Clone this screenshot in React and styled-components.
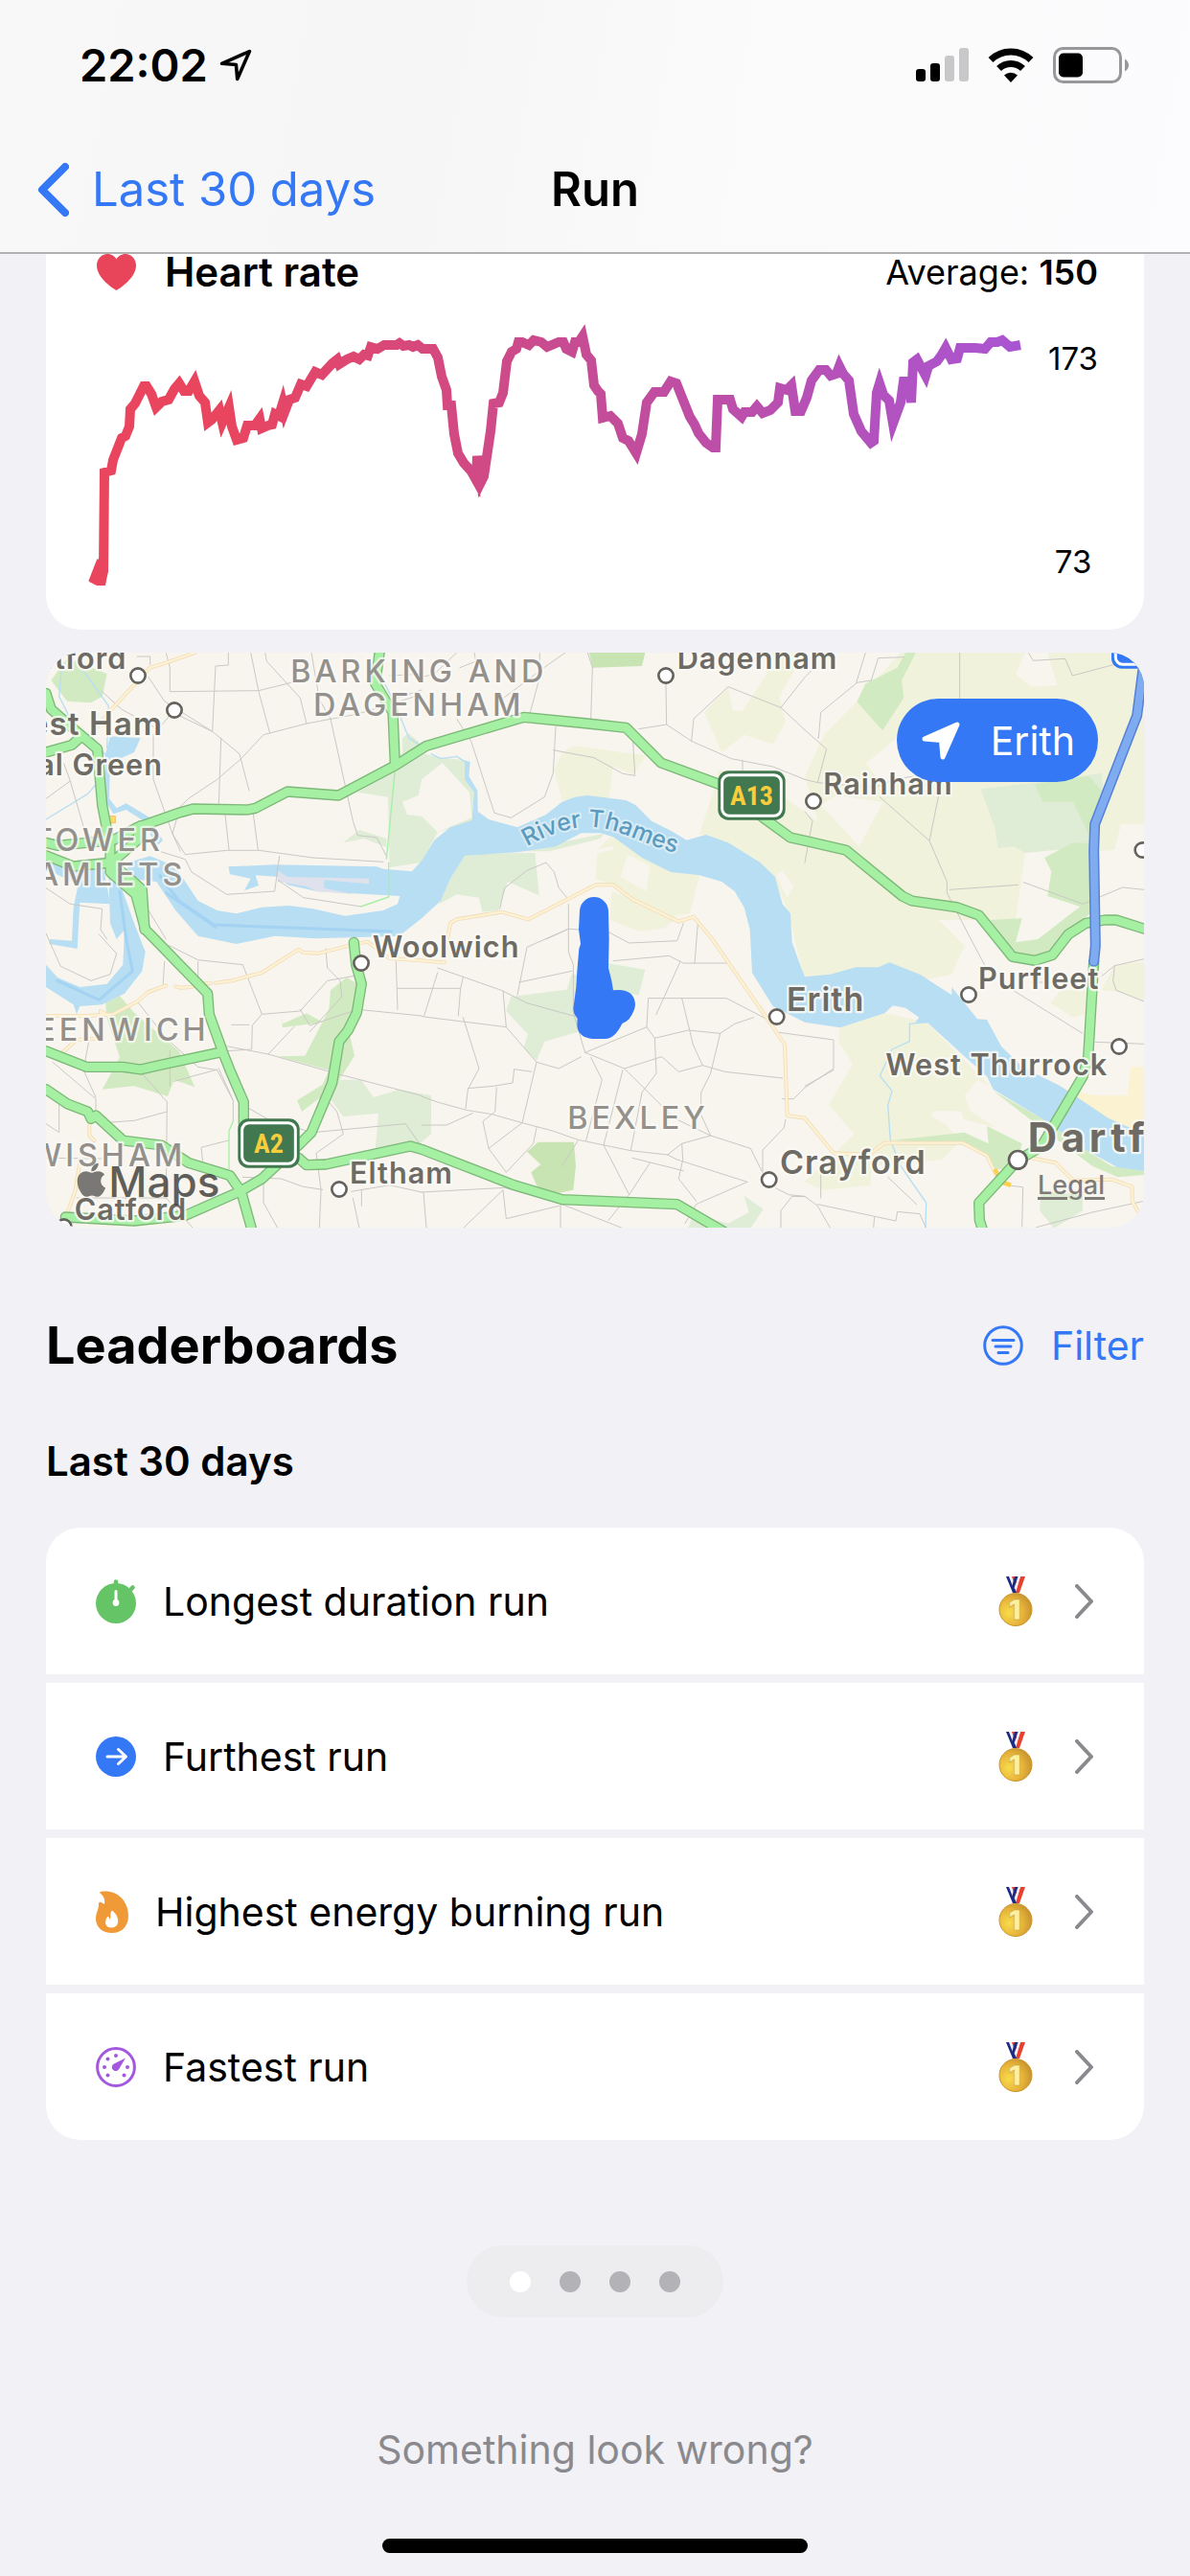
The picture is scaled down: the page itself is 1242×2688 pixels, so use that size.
import React from "react";
import styled, { createGlobalStyle } from "styled-components";
import { FaApple } from "react-icons/fa";

const blue = "#3478f6";

const GlobalStyle = createGlobalStyle`
  *, *::before, *::after { box-sizing: border-box; }
  body {
    margin: 0;
    background: #f2f1f6;
    color: #000;
    font-family: Inter, "Liberation Sans", sans-serif;
    font-size: 41px;
    line-height: 50px;
  }
  button {
    border: 0;
    padding: 0;
    background: none;
    color: inherit;
    font: inherit;
    cursor: pointer;
  }
  a { color: inherit; text-decoration: none; }
  h1, h2, h3, p, ul { margin: 0; padding: 0; font-size: inherit; }
  svg { display: block; flex: none; }
`;

const Page = styled.div`
  display: flex;
  flex-direction: column;
  min-height: 100vh;
`;

const Header = styled.header`
  background: linear-gradient(100deg, #f8f8f8 0%, #f6f6f6 35%, #fafafa 60%, #fcfcfe 100%);
  border-bottom: 2px solid #b1b1b4;
`;

const StatusBar = styled.div`
  display: flex;
  align-items: center;
  justify-content: space-between;
  height: 136px;
  padding: 0 64px 0 83px;
`;

const StatusGroup = styled.div`
  display: flex;
  align-items: center;
  gap: ${(p) => p.$gap}px;
`;

const Time = styled.span`
  font-size: 47px;
  font-weight: 600;
`;

const NavBar = styled.nav`
  display: grid;
  grid-template-columns: 1fr auto 1fr;
  align-items: center;
  height: 127px;
  padding: 0 39px 4px;
`;

const BackLink = styled.a`
  display: flex;
  align-items: center;
  gap: 24px;
  color: ${blue};
  font-size: 49px;
`;

const Title = styled.h1`
  font-size: 49px;
  font-weight: 600;
`;

const Main = styled.main`
  display: flex;
  flex-direction: column;
  padding: 0 48px;
`;

const HeartCard = styled.section`
  padding: 0 48px 42px 42px;
  border-radius: 0 0 36px 36px;
  background: #fff;
`;

const CardHead = styled.div`
  display: flex;
  align-items: center;
  height: 38px;
  padding-left: 11px;
`;

const CardTitle = styled.h2`
  flex: 1;
  padding-left: 30px;
  font-size: 42px;
  font-weight: 600;
`;

const Average = styled.p`
  font-size: 36px;

  b { font-weight: 600; }
`;

const ChartRow = styled.div`
  display: flex;
  justify-content: space-between;
  height: 312px;
`;

const Line = styled.svg`
  flex: 1;
  min-width: 0;
  height: 312px;
  overflow: visible;
`;

const Scale = styled.div`
  display: flex;
  flex-direction: column;
  align-items: center;
  justify-content: space-between;
  padding: 46px 0 4px 18px;
  font-size: 33px;
  line-height: 50px;
`;

const MapCard = styled.section`
  position: relative;
  margin-top: 24px;
  overflow: hidden;
  border-radius: 36px;
  background: #f8f5ee;
`;

const MapSvg = styled.svg`
  width: 100%;
  aspect-ratio: 1146 / 600;
  font-family: Inter, "Liberation Sans", sans-serif;
`;

const PlaceButton = styled.button`
  position: absolute;
  top: 48px;
  right: 48px;
  display: flex;
  align-items: center;
  gap: 32px;
  height: 87px;
  padding: 0 24px 0 26px;
  border-radius: 44px;
  background: ${blue};
  color: #fff;
`;

const Legal = styled.a`
  position: absolute;
  right: 41px;
  bottom: 26px;
  color: #7f7c78;
  font-size: 27px;
  font-weight: 500;
  line-height: 36px;
  text-decoration: underline;
  text-decoration-thickness: 3px;
  text-underline-offset: 3px;
`;

const SectionHead = styled.div`
  display: flex;
  align-items: center;
  justify-content: space-between;
  margin-top: 93px;
`;

const SectionTitle = styled.h2`
  font-size: 54px;
  font-weight: 700;
  line-height: 60px;
`;

const FilterButton = styled.button`
  display: flex;
  align-items: center;
  gap: 29px;
  color: ${blue};
`;

const SubTitle = styled.h3`
  margin-top: 66px;
  font-size: 42px;
  font-weight: 600;
`;

const Board = styled.ul`
  display: flex;
  flex-direction: column;
  gap: 9px;
  margin-top: 44px;
  overflow: hidden;
  border-radius: 36px;
  list-style: none;
`;

const Row = styled.a`
  display: flex;
  align-items: center;
  height: 153px;
  padding: 0 52px;
  background: #fff;
`;

const RowLabel = styled.span`
  flex: 1;
  padding-left: 28px;
`;

const RowEnd = styled.span`
  display: flex;
  align-items: center;
  gap: 44px;
`;

const Pager = styled.nav`
  display: flex;
  align-items: center;
  align-self: center;
  gap: 30px;
  height: 75px;
  margin-top: 110px;
  padding: 0 45px;
  border-radius: 38px;
  background: #ededf0;
`;

const Dot = styled.button`
  width: 22px;
  height: 22px;
  border-radius: 50%;
  background: ${(p) => (p.$active ? "#fff" : "#b3b2b7")};
`;

const Report = styled.button`
  align-self: center;
  margin-top: 113px;
  color: #8a8a8e;
`;

const HomeBar = styled.div`
  align-self: center;
  width: 444px;
  height: 15px;
  margin: auto 0 24px;
  border-radius: 8px;
  background: #000;
`;

/* ---------- icons ---------- */

const LocationArrow = ({ size, filled }) => (
  <svg width={size} height={size} viewBox="0 0 40 40" aria-hidden="true">
    <path
      d="M3 18 37 3 22 37 20.500 19.500z"
      fill={filled ? "currentColor" : "none"}
      stroke="currentColor"
      strokeWidth={filled ? 5 : 4.2}
      strokeLinejoin="round"
    />
  </svg>
);

const Signal = () => (
  <svg width="55" height="36" viewBox="0 0 55 36" aria-label="Signal">
    <rect x="0" y="22" width="10" height="13" rx="3" />
    <rect x="15" y="16" width="10" height="19" rx="3" />
    <rect x="30" y="8" width="10" height="27" rx="3" fill="#c8c8ca" />
    <rect x="45" y="0" width="10" height="35" rx="3" fill="#c8c8ca" />
  </svg>
);

const Wifi = () => (
  <svg width="48" height="36" viewBox="0 0 48 36" aria-label="Wi-Fi">
    <path d="M3 12.500a30 30 0 0 1 42 0M11.500 21.500a18 18 0 0 1 25 0" fill="none" stroke="#000" strokeWidth="7" />
    <path d="M24 36l-7-7.500a10 10 0 0 1 14 0z" />
  </svg>
);

const Battery = () => (
  <svg width="79" height="38" viewBox="0 0 79 38" aria-label="Battery">
    <rect x="1.500" y="1.500" width="69" height="35" rx="9" fill="none" stroke="#98989a" strokeWidth="3" />
    <path d="M75 12.500q4 2.500 4 6.500t-4 6.500z" fill="#98989a" />
    <rect x="6" y="6.500" width="25" height="25" rx="5" />
  </svg>
);

const Chevron = ({ width, height, color, stroke, back }) => (
  <svg width={width} height={height} viewBox={`0 0 ${width} ${height}`} aria-hidden="true">
    <path
      d={
        back
          ? `M${width - stroke / 2} ${stroke / 2}L${stroke / 2 + 1} ${height / 2}L${width - stroke / 2} ${height - stroke / 2}`
          : `M${stroke / 2} ${stroke / 2}L${width - stroke / 2 - 1} ${height / 2}L${stroke / 2} ${height - stroke / 2}`
      }
      fill="none"
      stroke={color}
      strokeWidth={stroke}
      strokeLinecap="round"
      strokeLinejoin="round"
    />
  </svg>
);

const Heart = () => (
  <svg width="41" height="38" viewBox="0 0 41 38" aria-hidden="true">
    <path
      d="M20.500 38C17 36 0 25 0 12 0 5 5 0 11 0c4.500 0 7.800 2.400 9.500 5.500C22.200 2.400 25.500 0 30 0c6 0 11 5 11 12 0 13-17 24-20.500 26z"
      fill="#e9455a"
    />
  </svg>
);

const FilterIcon = () => (
  <svg width="42" height="42" viewBox="0 0 42 42" fill="none" stroke={blue} strokeWidth="3" strokeLinecap="round" aria-hidden="true">
    <circle cx="21" cy="21" r="19.300" />
    <path d="M10 15.500h22M13 22h16M16 28.500h10" />
  </svg>
);

const Stopwatch = () => (
  <svg width="42" height="46" viewBox="0 0 42 46" aria-hidden="true">
    <circle cx="21" cy="25" r="21" fill="#64c466" />
    <path d="M21 2.500v6M38.500 8.500l-3 3" stroke="#64c466" strokeWidth="4.500" strokeLinecap="round" />
    <path d="M21 12.500v12" stroke="#fff" strokeWidth="3" strokeLinecap="round" />
    <circle cx="21" cy="24.500" r="3.400" fill="#fff" />
  </svg>
);

const ArrowCircle = () => (
  <svg width="42" height="42" viewBox="0 0 42 42" aria-hidden="true">
    <circle cx="21" cy="21" r="21" fill={blue} />
    <path d="M12 21h19M23.500 13.500l8 7.500-8 7.500" fill="none" stroke="#fff" strokeWidth="3" strokeLinecap="round" strokeLinejoin="round" />
  </svg>
);

const Flame = () => (
  <svg width="34" height="44" viewBox="0 0 34 44" aria-hidden="true">
    <path
      d="M5 1C20-2 34 9 34 26c0 11-7 18-17 18C7 44 0 38 0 29c0-6 3-9 3-15 0-4 3-2 6 0 1-5-1-9-4-11-1-1-1-2 0-2z"
      fill="#f09a37"
    />
    <path d="M17 20.500c-.5 0 5 3 6 9 1 5-1.500 9-6.500 9S9 35 10.500 30.500c.6-2 1.500-4 2.500-3.500 1 .4.500 2 1.500 2.500 2-.5-.5-6.500 2.500-9z" fill="#fff" />
  </svg>
);

const Gauge = () => (
  <svg width="42" height="42" viewBox="0 0 42 42" fill="#a358df" aria-hidden="true">
    <circle cx="21" cy="21" r="19.400" fill="none" stroke="#a358df" strokeWidth="3" />
    <circle cx="21" cy="9" r="2" />
    <circle cx="12.500" cy="12.500" r="2" />
    <circle cx="9" cy="21" r="2" />
    <circle cx="12.500" cy="29.500" r="2" />
    <circle cx="29.500" cy="29.500" r="2" />
    <circle cx="33" cy="21" r="2" />
    <path d="M31 11.500L24.500 22.500a4 4 0 1 1-5.500-5z" />
  </svg>
);

const Medal = () => (
  <svg width="36" height="52" viewBox="0 0 36 52" aria-label="First place">
    <defs>
      <radialGradient id="gold" cx="0.3" cy="0.6" r="0.8">
        <stop offset="0" stopColor="#f8dc4a" />
        <stop offset="0.55" stopColor="#e6b23a" />
        <stop offset="1" stopColor="#bd8a2a" />
      </radialGradient>
    </defs>
    <path d="M23 0h5l-6 17h-4z" fill="#e8402f" />
    <path d="M20 0h3l-6 17h-3z" fill="#f1f3f8" />
    <path d="M8 0h4l7 17h-4z" fill="#1c2a86" />
    <path d="M11 0h3l4 9-2 4z" fill="#f1f3f8" />
    <path d="M14 0h3l2 6-2 3z" fill="#e8402f" />
    <path d="M17 0h3.500l-5 15-1.500-4z" fill="#1c2a86" />
    <circle cx="18" cy="34.500" r="17" fill="url(#gold)" stroke="#c8942e" strokeWidth="1" />
    <text x="17" y="45" textAnchor="middle" fontFamily="Inter" fontWeight="900" fontSize="29" fill="#fbefa0" stroke="#c99a2f" strokeWidth="0.5">
      1
    </text>
  </svg>
);

/* ---------- heart rate line ---------- */

const heartPath =
  "M97 608 106 585 105 609 108 596 109 493 116 491 118 480 127 457 131 455 135 445 136 427 141 421 145 413 150 403 153 403 158 411 163 425 169 419 176 417 182 406 187 400 192 408 197 408 203 398 208 413 214 420 217 441 221 438 229 428 232 441 239 425 242 445 247 459 254 457 258 444 266 444 271 437 273 447 280 444 284 443 287 432 291 434 295 421 297 430 302 417 308 415 314 401 320 403 329 388 336 391 347 379 352 375 354 380 362 375 369 372 375 375 380 370 384 371 387 362 394 364 401 360 414 360 417 358 421 361 427 360 431 362 436 360 441 364 452 364 457 373 461 393 466 407 467 423 471 423 474 453 478 473 484 483 492 492 497 501 498 476 502 503 505 497 512 450 515 421 521 420 525 410 529 377 534 367 539 364 541 357 545 357 552 360 557 355 565 357 571 362 583 357 588 357 591 364 597 367 600 357 604 357 608 351 612 370 617 376 620 402 624 408 627 411 629 436 637 434 645 442 650 457 656 460 664 473 670 453 675 420 683 409 693 409 700 398 706 400 714 420 720 435 725 443 729 452 737 462 744 467 747 467 749 417 762 417 765 427 774 435 777 430 785 430 790 424 796 431 804 428 812 420 814 405 821 407 826 402 830 429 836 429 842 415 847 397 855 386 862 386 867 392 873 390 876 382 880 390 886 397 891 432 899 450 909 462 912 460 915 410 918 400 922 412 928 418 932 442 940 420 943 398 949 398 951 420 953 378 957 375 966 392 969 382 978 377 983 370 987 363 993 375 999 374 1002 363 1010 363 1018 363 1028 364 1034 357 1041 357 1046 355 1054 362 1065 360";

const HeartLine = () => (
  <Line viewBox="90 303 980 312" preserveAspectRatio="xMinYMin meet" role="img" aria-label="Heart rate over the run">
    <defs>
      <linearGradient id="rate" gradientUnits="userSpaceOnUse" x1="92" y1="0" x2="1065" y2="0">
        <stop offset="0" stopColor="#e9455e" />
        <stop offset="0.15" stopColor="#e9455f" />
        <stop offset="0.55" stopColor="#c44c98" />
        <stop offset="1" stopColor="#a955d2" />
      </linearGradient>
    </defs>
    <path d="M93 607 104 581 112 595 110 611 101 611z" fill="#e9455e" />
    <path d={heartPath} fill="none" stroke="url(#rate)" strokeWidth="10" strokeLinejoin="miter" strokeMiterlimit="6" />
  </Line>
);

/* ---------- map ---------- */

const paleFields = [
  "1615,400 1640,345 1675,325 1900,355 1865,415 1800,390 1785,500 1640,495",
  "2085,220 2160,140 2175,215 2205,215 2280,100 2290,33 2400,33 2355,110 2320,170 2340,250 2300,320 2210,290 2140,345",
  "2070,600 2110,480 2130,400 2270,440 2440,560 2400,420 2460,290 2560,190 2640,100 2700,33 3462,33 3462,570 3390,570 3370,650 3320,655 3160,650 3060,870 2820,870 2900,950 2860,1040 2760,1060 2665,1020 2560,1040 2400,1068 2350,850 2300,730 2160,650",
  "1750,650 1800,600 1850,640 1980,720 2070,730 2040,850 1960,860 1880,810 1790,760 1745,740",
  "1880,810 2000,860 1960,895 1880,906 1790,870 1795,780",
  "2510,1207 2650,1162 2715,1175 2785,1192 2870,1280 2980,1390 2940,1370 2900,1420 2920,1470 3000,1520 2800,1470 2890,1560 2830,1620 2610,1640 2605,1700 2460,1715 2400,1690 2555,1540 2475,1450 2550,1320 2505,1250",
  "3170,1130 3200,1090 3300,1090 3290,1160 3240,1175",
  "3330,1090 3370,1010 3462,1000 3462,1125 3380,1095",
];

const creamPatches = [
  "1620,690 1645,665 1800,640 1800,650",
  "1823,735 1845,665 1915,700 1903,780",
  "2450,510 2500,480 2645,500 2570,640",
  "2590,380 2700,290 2760,340 2740,440 2640,440",
  "3060,100 3090,33 3160,33 3190,135 3110,140",
  "2820,870 2990,870 3060,940 2920,960",
  "3090,660 3130,622 3175,630 3150,675 3172,718 3160,795 3262,828 3130,930 3060,870",
  "2793,1480 2810,1468 2890,1468 2910,1540 2860,1525",
  "2310,730 2330,715 2365,765 2345,800",
];

const lightGreens = [
  "1000,470 1115,400 1210,350 1250,360 1335,370 1345,430 1365,470 1365,560 1250,595 1200,690 1100,705 1095,485",
  "955,628 1005,588 1090,615 1090,642 1020,615",
  "1140,350 1140,300 1160,285 1200,320",
  "1335,662 1555,660 1568,793 1470,750 1440,840 1390,845 1380,800 1310,790 1255,820 1290,740",
  "1500,655 1620,630 1770,600 1760,615 1600,655",
  "935,1370 1010,1370 1050,1425 1130,1400 1230,1420 1230,1540 1200,1565 1200,1580 1055,1590 1065,1475 955,1485 915,1430",
  "1465,1155 1480,1110 1655,1088 1670,1040 1690,1040 1690,1220 1585,1250 1560,1310 1520,1270 1533,1228",
  "1780,1005 1900,1025 1880,1105 1780,1090",
  "2035,1835 2050,1790 2160,1820 2225,1785 2210,1733 2270,1775 2230,1835",
  "2950,460 3120,440 3330,410 3335,470 3300,640 3090,660 3055,640 3005,645 2995,580",
  "3140,1720 3270,1730 3270,1780 3180,1835 3135,1780",
];

const parkGreens = [
  "90,50 170,80 215,100 200,170 165,190 90,185 40,120",
  "210,1130 255,1108 300,1160 440,1280 490,1393 425,1370 405,1422 300,1390 200,1400 255,1300 215,1180",
  "915,1090 965,1050 1000,1070 990,1200 975,1230 990,1295 930,1390 825,1470 810,1435 890,1385 910,1340 750,1297 835,1295 910,1150",
  "760,1160 765,1195 840,1162 890,1190 765,1207",
  "3120,445 3290,420 3335,470 3298,620 3240,500 3145,500",
  "3150,675 3240,628 3290,630 3295,850 3220,900 3180,980 3120,990 3050,985 2980,870 3080,865 3060,940 3130,930 3262,828 3160,795 3172,718",
  "2563,187 2590,130 2690,80 2715,33 2748,33 2703,120 2710,175 2643,277",
  "2970,1515 3080,1570 3060,1650 2990,1650 2970,1605 2890,1565 2800,1565 2670,1560 2900,1535 2975,1570",
  "2990,1405 3140,1490 3280,1590 3360,1640 3462,1655 3462,1668 3380,1675 3300,1640 3100,1490",
];

const woods = [
  "1725,33 1900,33 1890,75 1735,80",
  "1530,1595 1565,1565 1677,1565 1683,1640 1675,1715 1600,1730 1560,1700 1543,1660 1573,1635",
];

const water = [
  "280,690 350,670 400,690 440,720 500,810 560,840 620,850 700,830 785,825 860,835 960,857 1080,840 1125,820 1132,795 1040,790 870,780 780,760 755,735 680,730 690,762 645,778 665,740 600,727 595,703 740,697 1060,703 1080,710 1170,718 1200,685 1240,620 1290,580 1358,558 1365,470 1335,430 1335,370 1352,375 1348,420 1375,465 1376,530 1410,555 1500,580 1590,540 1640,500 1680,485 1720,480 1840,495 1870,510 1920,560 1980,590 2030,620 2090,603 2160,628 2260,690 2307,735 2330,820 2355,850 2360,940 2385,1010 2400,1048 2480,1040 2560,1018 2630,1018 2665,1003 2760,1040 2860,1105 2860,1080 2940,1180 2970,1182 3015,1265 3080,1330 3200,1390 3350,1490 3462,1540 3462,1655 3380,1645 3280,1590 3140,1490 2990,1400 2970,1360 2870,1270 2785,1192 2745,1190 2758,1175 2715,1145 2675,1138 2650,1162 2510,1207 2400,1190 2300,1140 2235,1035 2228,900 2210,830 2180,780 2140,750 2070,730 1980,720 1890,675 1800,610 1760,598 1700,598 1620,640 1500,658 1335,668 1290,740 1260,810 1200,865 1130,920 870,928 740,920 620,945 500,920 430,840 370,750 280,740",
  "220,720 225,880 245,930 270,900 265,1010 215,1070 130,1080 60,1050 24,1010 24,1080 110,1135 120,1165 130,1140 200,1135 270,1100 325,1030 335,970 300,880 250,740",
  "225,295 320,300 300,345 255,365 225,362 222,490 245,520 275,505 350,550 390,620 370,640 330,560 275,525 235,538 205,490 210,350",
  "24,685 200,690 220,790 225,820 130,815 122,960 35,945 35,930 105,935 110,830 125,760 24,710",
];

const streams = [
  "24,555 155,475 210,410",
  "75,60 65,170 110,260 170,300 215,360",
  "120,60 220,200 215,330",
  "1085,130 1120,200 1160,300 1200,325",
  "1230,350 1260,365 1310,358 1345,380",
  "2785,1190 2728,1195 2728,1250 2673,1275 2635,1358 2673,1405 2660,1450 2668,1560 2700,1640 2780,1755 2778,1835",
];

const channels = [
  "255,780 275,930 295,1030 190,1120 60,1060",
  "380,730 440,810 550,885 1105,906",
  "400,785 480,840 555,892",
];

const lanes = [
  "310,45 350,45 350,70 M400,33 412,80 412,155 690,152 840,115",
  "595,33 595,72 555,75 545,280 420,220 360,290 360,430 420,600 460,665 590,652 690,652 860,675 1080,688",
  "665,33 690,155 725,285 840,255 1000,225 1180,170",
  "710,33 715,60 820,175 840,255",
  "915,240 985,560 1000,605 1060,612 1090,670",
  "345,110 395,185 545,280 630,350 660,465",
  "725,285 705,290 635,365 560,430 470,490 430,530",
  "572,300 565,510 M585,540 597,650 M672,530 688,650",
  "24,490 100,435 145,590 180,620 M100,435 80,380",
  "200,155 260,210 360,265",
  "855,33 880,180 915,240",
  "1100,105 1200,100 M1080,190 1200,150",
  "24,770 100,820 200,835 195,900 215,930",
  "380,655 460,680 480,720 590,790 740,780 755,670",
  "750,745 830,800 1010,828",
  "440,530 420,600 445,655",
  "345,840 400,930 M24,912 70,1015 165,1060 225,1040 245,975 190,915",
  "1310,33 1240,100 1200,110 M1365,33 1370,60 1320,80",
  "1570,33 1570,110 1540,220 M1650,33 1590,75 1450,180",
  "1620,265 1612,410 1585,485 1480,550 1428,535 1355,310 1310,240",
  "1612,338 1740,362 1830,412 1868,418 1862,310",
  "1735,80 1730,240 M1720,33 1735,80",
  "1965,130 1967,258 1880,272 M1967,258 2045,310 2170,365 2300,390 2400,430",
  "2045,310 2052,240 2160,140 2325,205 2400,275",
  "2325,205 2400,110 2440,70 M2205,370 2205,400",
  "1445,835 1460,770 1530,715 1590,690 1615,720 1630,770 1655,800",
  "1660,820 1660,970 1675,1010 1675,1160 1712,1285 M1590,930 1660,898 1780,905 1850,942 2000,935 2020,880",
  "2065,880 2055,1005 2160,1005 2180,1030 M1800,998 1975,982 2020,1005 2055,1005",
  "1500,1105 1530,955 1655,900 M1505,1065 1670,1030",
  "1250,1020 1450,1090 1530,1130 1675,1170",
  "1200,1084 1322,1084 1330,1050 M1250,1035 1208,1170 M1322,1084 1315,1170",
  "1200,1172 1465,1205 1455,1092 M1465,1205 1560,1315 1630,1335 1700,1298",
  "1330,1175 1380,1335 1345,1400 1338,1460 M1345,1397 1425,1390 1485,1380 1490,1337 1545,1345",
  "1200,1422 1250,1440 1340,1465 1420,1478 1515,1505 1610,1530 1690,1558 1855,1592 1970,1605 2000,1620 2220,1690",
  "1560,1315 1515,1505 1410,1585 1392,1500 1430,1470 1435,1395",
  "1200,1512 1278,1512 1360,1475 M1410,1585 1465,1660 1550,1570 1560,1520",
  "1712,1285 1835,1335 1900,1400 1990,1490 2105,1545 2230,1585 2265,1655",
  "1712,1285 1905,1205 1930,1240 2035,1215 2135,1225 2180,1195 2240,1175",
  "1905,1205 1910,1115 2155,1115 2280,1180 M1935,1165 2010,1000",
  "2015,1115 2050,1260 2080,1325 M2135,1225 2105,1350 2075,1410 2075,1480 2105,1545",
  "1930,1240 1935,1350 1890,1410 1855,1592 M1730,1300 1765,1370 1715,1560",
  "1830,1340 1770,1575 1850,1730 1785,1810 M1835,1335 1952,1298 2005,1345 2080,1325 2150,1345 2330,1365",
  "2105,1545 2015,1570 1970,1605 M2015,1570 2018,1620 2005,1680 2060,1750",
  "2220,1690 2060,1760 2025,1820 M1860,1615 2020,1655 M1915,1630 1850,1730",
  "2330,1430 2365,1430 2400,1395 2490,1335 2490,1245 2400,1233 2320,1222",
  "2340,1495 2335,1520 2268,1590 2268,1660 M2310,1710 2350,1730 2400,1735 2440,1765 2480,1835",
  "2440,1760 2685,1812 2690,1783 2760,1790 2780,1835 M2750,1760 2660,1675 M2450,1640 2450,1740",
  "1200,1722 1460,1708 1640,1760 1830,1835 M1640,1640 1690,1560 M1635,1760 1635,1835",
  "1330,1835 1455,1715 1465,1805 1630,1765 M1206,1722 1215,1835",
  "410,950 500,995 640,1010 700,1165 820,1155 905,1060 990,1045",
  "395,1000 390,1080 M500,1000 500,1080 M900,960 905,1020 945,1060 950,1110 850,1220",
  "700,1165 670,1200 668,1275 590,1280 M605,1198 660,1198 M820,1150 850,1200 1000,1150 1200,1170",
  "590,1265 720,1290 930,1350 1200,1420 M720,1290 800,1205",
  "1120,1000 1125,1150 M1125,1084 1200,1084",
  "310,1125 400,1240 500,1330 560,1340 610,1435 610,1500 M412,1280 412,1390 M425,1375 560,1338",
  "403,1440 400,1740 M403,1440 320,1345 M403,1470 300,1498 200,1505 M610,1435 565,1335",
  "45,1315 180,1430 180,1480 M65,1445 65,1535 24,1508 M130,1315 180,1425 M160,1240 145,1320",
  "24,1615 200,1617 M595,1560 510,1582 515,1630 M660,1460 730,1500 860,1535 1150,1508 1200,1580",
  "640,1675 760,1680 830,1705 890,1714 M705,1680 705,1755 750,1835 M910,1440 935,1470 955,1540 870,1600 885,1714 880,1835",
  "980,1720 1100,1700 1200,1722 M1012,1714 1012,1765 M985,1740 1005,1835 M120,1740 400,1740 485,1835",
  "2400,430 2440,440 2620,455 2680,430 2740,420",
  "2400,690 2424,560 2400,530",
  "2590,33 2560,130 2450,220 2443,300 2440,300 M2400,275 2468,335 2440,440",
  "2608,120 2630,50 2710,47 M2885,33 2885,180 M2562,127 2608,120",
  "3100,33 3115,58 3215,52 3238,105 3370,70",
  "2635,485 2790,622 2820,475 M2790,622 2845,750 2845,785 2920,930 2965,1015",
  "2853,775 3068,760 M3085,752 3270,820 3395,768 3462,775",
  "3055,1092 3270,1225 M3310,1252 3462,1258 M3110,1065 3250,1065",
  "3462,992 3370,1013 3365,1060 3375,1090 3462,1125 M3330,1045 3370,1013",
  "3045,1702 3083,1706 3080,1830 M3125,1832 3300,1785 3462,1750",
  "2400,1736 2360,1735 2325,1780 2325,1835 M2618,1800 2615,1835 M2400,1390 2490,1340",
];

const yellowRoads = [
  "230,210 350,80 400,65 490,33",
  "180,270 232,208",
  "24,1170 150,1170 235,1165 310,1125 345,1095 400,1075",
  "430,1078 445,1082 480,1080 495,1070 540,1067",
  "555,1067 605,1060 700,1035 815,962 830,972 880,974 975,950 1030,938 1100,990 1200,997 1270,1003",
  "75,1285 120,1245 200,1240 195,1155 220,1170",
  "160,1500 160,1545 175,1560 M130,1630 115,1720 90,1790",
  "1280,935 1290,880 1310,868 1450,845 1535,868 1745,760 1800,760 1860,805 2005,875 2052,860 2110,930 2290,1190 2337,1260 2345,1482 2400,1490 2490,1600 2600,1605 2650,1568 2895,1568 2970,1608 3000,1670",
  "1270,1003 1280,935",
  "3110,1615 3185,1630 3240,1685 3360,1682 3425,1705 3425,1750 3445,1785",
];

const mainRoads = [
  "24,160 40,210 120,280 185,335 200,510 225,640 225,720 305,790 335,900 350,915 530,1100 535,1165 580,1290 600,1340 643,1440 643,1540",
  "24,345 105,322 135,295",
  "24,628 60,637 235,620 310,580 445,533 485,522 655,525 680,520 780,468 940,480 1120,385 1215,325 1520,235 1720,255 1840,268 1950,378 2140,448 2270,550 2355,612 2400,622 2530,652 2705,795 2735,810 2875,830 2945,855 3050,985 3120,997 3175,980 3225,915 3280,880 3340,870 3375,870 3470,900",
  "24,668 110,702 230,690 310,620 320,575",
  "1070,20 1055,130 1110,220 1117,385",
  "228,690 325,775 333,900",
  "988,940 995,1010 1012,1070 997,1160 970,1215 942,1250 920,1380 855,1535 820,1570 700,1680 635,1718 460,1795 300,1812 85,1800",
  "815,1615 840,1637 900,1635 1165,1578 1200,1588 1490,1700 1640,1745 2000,1760 2145,1845",
  "24,1280 150,1330 265,1330 320,1338 400,1320 575,1283",
  "24,1400 90,1445 155,1470 165,1492 180,1482 265,1560 385,1575 470,1630 600,1670 635,1720 670,1845",
  "3305,1000 3287,1300 3270,1360 3140,1580 3067,1622 2945,1755 2947,1810 2960,1850",
];

const stops = [
  [312, 105], [426, 213], [1965, 105], [2427, 498], [3457, 651], [1011, 1005],
  [2312, 1173], [2288, 1683], [2913, 1104], [3384, 1266], [942, 1713], [80, 1830],
];

/* text, x, baseline, size, anchor */
const towns = [
  ["Stratford", 277, 85, 92, "end"],
  ["West Ham", 390, 290, 100, "end"],
  ["Bethnal Green", 390, 418, 92, "end"],
  ["Dagenham", 2000, 85, 92, "start"],
  ["Rainham", 2458, 478, 92, "start"],
  ["Woolwich", 1047, 987, 92, "start"],
  ["Catford", 113, 1810, 92, "start"],
  ["Eltham", 975, 1695, 92, "start"],
  ["Erith", 2343, 1155, 102, "start"],
  ["Crayford", 2322, 1665, 102, "start"],
  ["Purfleet", 2943, 1085, 92, "start"],
  ["West Thurrock", 2653, 1355, 92, "start"],
];

const boroughs = [
  ["BARKING AND", 1192, 125, "middle"],
  ["DAGENHAM", 1192, 232, "middle"],
  ["TOWER", 393, 655, "end"],
  ["HAMLETS", 463, 763, "end"],
  ["GREENWICH", 536, 1248, "end"],
  ["LEWISHAM", 463, 1640, "end"],
  ["BEXLEY", 1878, 1525, "middle"],
];

const Shapes = ({ items, fill }) => items.map((points) => <polygon key={points} points={points} fill={fill} />);

const Roads = ({ items, edge, edgeWidth, fill, width }) => (
  <g fill="none" strokeLinejoin="round" strokeLinecap="round">
    {edge && items.map((d) => <path key={d} d={"M" + d} stroke={edge} strokeWidth={edgeWidth} />)}
    {items.map((d) => (
      <path key={d} d={"M" + d} stroke={fill} strokeWidth={width} />
    ))}
  </g>
);

const Shield = ({ x, y, width, label }) => (
  <g>
    <rect x={x} y={y} width={width} height="154" rx="32" fill="#41784f" />
    <rect x={x + 13} y={y + 13} width={width - 26} height="128" rx="22" fill="none" stroke="#fff" strokeWidth="9" />
    <text
      x={x + width / 2}
      y={y + 106}
      textAnchor="middle"
      fontFamily="'Liberation Sans Narrow', 'Roboto Condensed', Roboto, sans-serif"
      fontWeight="700"
      fontSize="84"
      fill="#f8ce3c"
    >
      {label}
    </text>
  </g>
);

const RouteMap = () => (
  <MapSvg viewBox="24 33 3438 1800" role="img" aria-label="Map of the run route">
    <rect x="24" y="33" width="3438" height="1800" fill="#f8f5ee" />
    <Shapes items={paleFields} fill="#f0f2dc" />
    <Shapes items={creamPatches} fill="#f8f5ee" />
    <polygon points="3180,1390 3310,1420 3410,1420 3420,1330 3462,1330 3462,1545 3350,1500" fill="#faf2d0" />
    <Shapes items={lightGreens} fill="#dfecd6" />
    <polygon points="1200,430 1265,378 1350,470 1358,550 1250,595 1200,545 1155,540 1140,500 1190,480" fill="#f8f5ee" />
    <Shapes items={parkGreens} fill="#d2eac1" />
    <Shapes items={woods} fill="#c8e4b3" />
    <Shapes items={water} fill="#b7def2" />
    <polygon points="750,715 780,735 1035,740 1035,757 895,745 895,770 990,790 870,780 840,765 750,750" fill="#dfe2ec" />
    <Roads items={streams} fill="#b7def2" width="4" />
    <Roads items={channels} fill="#a3d2f2" width="9" />
    <Roads items={lanes} fill="#c9c8c5" width="3" />
    <path d="M1117 400 1090 680M1097 690V798L1010 828M610 1500 597 1530V1650" fill="none" stroke="#a6f0a4" strokeWidth="4" />
    <Roads items={yellowRoads} edge="#f2dcb9" edgeWidth="12" fill="#fdf2d3" width="7" />
    <rect x="220" y="545" width="21" height="21" fill="#fbdc62" stroke="#f0bd78" strokeWidth="3" />
    <path d="M2995 1650 3015 1690 3045 1700" fill="none" stroke="#fbd04e" strokeWidth="14" />
    <Roads items={mainRoads} edge="#7db879" edgeWidth="34" fill="#a6f0a4" width="26" />
    <Roads items={["3458,90 3440,230 3308,570 3305,650 3310,950 3305,1000"]} edge="#5580d6" edgeWidth="33" fill="#7facf0" width="24" />

    <g fill="#94918c" fontSize="97" fontWeight="500" letterSpacing="12" stroke="#fbfaf6" strokeOpacity="0.75" strokeWidth="14" strokeLinejoin="round" paintOrder="stroke">
      {boroughs.map(([name, x, y, anchor]) => (
        <text key={name} x={x} y={y} textAnchor={anchor}>
          {name}
        </text>
      ))}
    </g>
    <g fill="#fff" stroke="#65625d" strokeWidth="8">
      {stops.map(([x, y]) => (
        <circle key={x} cx={x} cy={y} r="23" />
      ))}
      <circle cx="3067" cy="1621" r="28" />
    </g>
    <g fill="#6e6b65" fontWeight="600" letterSpacing="3" stroke="#fbfaf6" strokeOpacity="0.85" strokeWidth="14" strokeLinejoin="round" paintOrder="stroke">
      {towns.map(([name, x, y, size, anchor]) => (
        <text key={name} x={x} y={y} fontSize={size} textAnchor={anchor}>
          {name}
        </text>
      ))}
      <text x="3098" y="1597" fontSize="126" fontWeight="700" letterSpacing="14">
        Dartford
      </text>
    </g>
    <path id="thames" d="M1530 640C1600 600 1680 572 1750 580 1830 588 1890 636 2040 672" fill="none" />
    <text fontSize="75" fontWeight="500" fill="#5b9bc0" stroke="#d9ecf5" strokeWidth="12" paintOrder="stroke">
      <textPath href="#thames">River Thames</textPath>
    </text>

    <Shield x={2128} y={403} width={211} label="A13" />
    <Shield x={625} y={1492} width={193} label="A2" />
    <rect x="3360" y="-40" width="180" height="123" rx="32" fill={blue} />
    <rect x="3373" y="-30" width="154" height="100" rx="22" fill={blue} stroke="#fff" strokeWidth="9" />

    <path
      d="M1695 843a45 45 0 0 1 90 0L1787 930 1785 1020 1795 1060 1800 1090Q1866 1082 1869 1135 1868 1155 1850 1180 1840 1190 1828 1194 1805 1242 1775 1242L1735 1242Q1690 1238 1687 1200L1688 1178Q1672 1160 1676 1140L1684 1080 1687 1030 1693 960 1698 945 1692 900z"
      fill={blue}
    />
    <g fill="#3c3c39" fillOpacity="0.82">
      <FaApple x="106" y="1624" size={120} color="#5e5d59" />
      <text x="220" y="1738" fontSize="132" fontWeight="500">
        Maps
      </text>
    </g>
  </MapSvg>
);

const records = [
  { label: "Longest duration run", Icon: Stopwatch },
  { label: "Furthest run", Icon: ArrowCircle },
  { label: "Highest energy burning run", Icon: Flame },
  { label: "Fastest run", Icon: Gauge },
];

export default function App() {
  return (
    <Page>
      <GlobalStyle />
      <Header>
        <StatusBar>
          <StatusGroup $gap={12}>
            <Time>22:02</Time>
            <LocationArrow size={34} />
          </StatusGroup>
          <StatusGroup $gap={20}>
            <Signal />
            <Wifi />
            <Battery />
          </StatusGroup>
        </StatusBar>
        <NavBar>
          <BackLink href="#back">
            <Chevron width={33} height={56} color={blue} stroke={8} back />
            Last 30 days
          </BackLink>
          <Title>Run</Title>
        </NavBar>
      </Header>

      <Main>
        <HeartCard>
          <CardHead>
            <Heart />
            <CardTitle>Heart rate</CardTitle>
            <Average>
              Average: <b>150</b>
            </Average>
          </CardHead>
          <ChartRow>
            <HeartLine />
            <Scale>
              <span>173</span>
              <span>73</span>
            </Scale>
          </ChartRow>
        </HeartCard>

        <MapCard>
          <RouteMap />
          <PlaceButton type="button">
            <LocationArrow size={40} filled />
            Erith
          </PlaceButton>
          <Legal href="#legal">Legal</Legal>
        </MapCard>

        <SectionHead>
          <SectionTitle>Leaderboards</SectionTitle>
          <FilterButton type="button">
            <FilterIcon />
            Filter
          </FilterButton>
        </SectionHead>

        <SubTitle>Last 30 days</SubTitle>
        <Board>
          {records.map(({ label, Icon }) => (
            <li key={label}>
              <Row href="#record">
                <Icon />
                <RowLabel>{label}</RowLabel>
                <RowEnd>
                  <Medal />
                  <Chevron width={20} height={36} color="#8a8a8e" stroke={4} />
                </RowEnd>
              </Row>
            </li>
          ))}
        </Board>

        <Pager aria-label="Pages">
          {[1, 2, 3, 4].map((n) => (
            <Dot key={n} type="button" $active={n === 1} aria-label={`Page ${n}`} />
          ))}
        </Pager>
        <Report type="button">Something look wrong?</Report>
      </Main>
      <HomeBar />
    </Page>
  );
}
